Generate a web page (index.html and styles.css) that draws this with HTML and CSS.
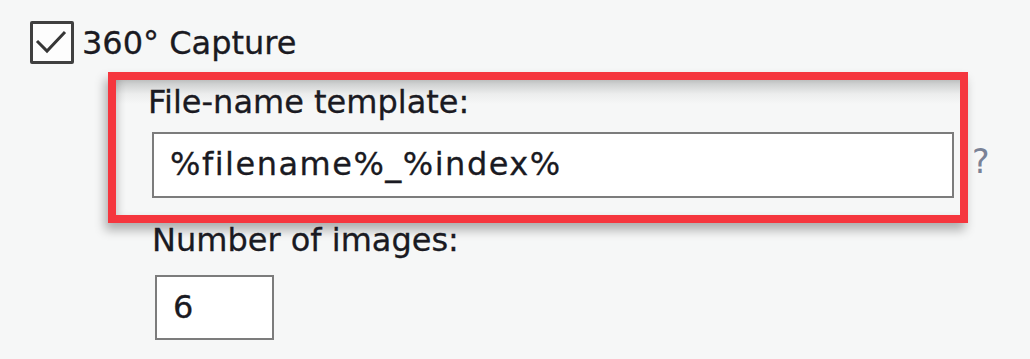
FILE: index.html
```html
<!DOCTYPE html>
<html lang="en">
<head>
<meta charset="UTF-8">
<title>360 Capture</title>
<link rel="stylesheet" href="styles.css">
</head>
<body>

<div class="panel">
	<div class="check_row">
		<span class="checkbox">
			<svg width="38" height="37" viewBox="0 0 38 37"><path d="M4 17 L14 27 L32 8" fill="none" stroke="#363636" stroke-width="3"/></svg>
		</span>
		<span class="check_label">360° Capture</span>
	</div>

	<div class="template_row">
		<div class="highlight">
			<div class="field_label">File-name template:</div>
			<div class="text_box wide">%filename%_%index%</div>
		</div>
		<span class="help">?</span>
	</div>

	<div class="count_block">
		<div class="field_label">Number of images:</div>
		<div class="text_box small">6</div>
	</div>
</div>

</body>
</html>
```

FILE: styles.css
```css
*,
*::before,
*::after {
	margin: 0;
	padding: 0;
	box-sizing: border-box;
}
HTML, BODY {
	width: 100%;
	height: 100%;
}
BODY {
	background: #f6f7f7;
	color: #1a1a22;
	font-family: "DejaVu Sans", "Liberation Sans", sans-serif;
	font-size: 32px;
	-webkit-text-stroke: 0.3px currentColor;
	overflow: hidden;
}

.panel {
	padding: 21px 0 0 30px;
}

.check_row {
	display: flex;
	align-items: center;
	height: 43px;
	gap: 8px;
}
.checkbox {
	display: flex;
	width: 44px;
	height: 43px;
	border: 3px solid #404040;
	border-radius: 2px;
	background: #fdfdfd;
}
.check_label {
	line-height: 43px;
	position: relative;
	top: 1px;
}

.template_row {
	display: flex;
	align-items: flex-start;
	margin: 8px 0 0 78px;
}
.highlight {
	width: 860px;
	border: 8px solid #f5363e;
	padding: 2px 6px 17px 36px;
	background: linear-gradient(#c4c6c6, #eceded 14px, #f6f7f7 24px);
	box-shadow: -3px 7px 10px rgba(0, 0, 0, 0.3), inset 6px 0 8px -4px rgba(0, 0, 0, 0.2);
}
.field_label {
	line-height: 40px;
	margin-left: -4px;
}
.text_box {
	background: #fff;
	border: 2px solid #7c7c7c;
	line-height: 61px;
	height: 66px;
	padding-left: 16px;
}
.wide {
	margin-top: 10px;
	letter-spacing: 1.5px;
}
.help {
	color: #7a8296;
	-webkit-text-stroke: 0;
	line-height: 40px;
	margin: 70px 0 0 4px;
	font-size: 33px;
}

.count_block {
	padding-left: 125px;
}
.count_block .field_label {
	line-height: 34px;
	margin-left: -3px;
}
.small {
	width: 119px;
	height: 65px;
	margin-top: 18px;
}
```
